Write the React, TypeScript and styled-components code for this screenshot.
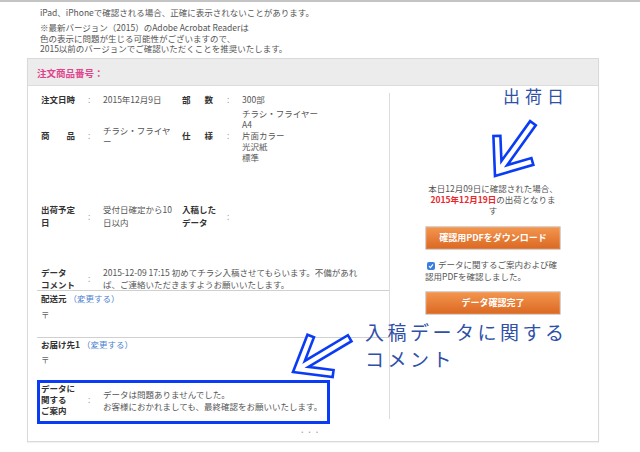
import React from 'react';
import styled, { createGlobalStyle } from 'styled-components';

const GlobalStyle = createGlobalStyle`
  html, body { margin: 0; padding: 0; background: #fff; }
  body {
    font-family: "Noto Sans CJK JP", "Noto Sans", sans-serif;
    color: #555;
  }
  * { box-sizing: border-box; }
`;

const Page = styled.div`
  position: relative;
  width: 640px;
  height: 452px;
  overflow: hidden;
`;

const TopRule = styled.div`
  height: 2px;
  background: #c4c4c4;
`;

/* ─── notice above the panel ─── */
const Notice = styled.div`
  padding: 5px 0 0 40px;
`;

const NoticeText = styled.p<{ $mb: number }>`
  margin: 0 0 ${(p) => p.$mb}px;
  font-size: 8.5px;
  line-height: 10.5px;
  color: #555;
  white-space: nowrap;
`;

/* ─── panel ─── */
const Panel = styled.section`
  margin-left: 27px;
  width: 572px;
  border: 1px solid #d9d9d9;
  box-shadow: 0 1px 1px rgba(0, 0, 0, 0.05);
  background: #fff;
`;

const PanelHeader = styled.header`
  height: 27px;
  padding: 2px 0 0 9px;
  background: #ececec;
  border-bottom: 1px solid #dcdcdc;
  font-size: 9.5px;
  font-weight: 700;
  line-height: 24px;
  color: #e0448c;
`;

const PanelBody = styled.div`
  display: flex;
`;

const LeftCol = styled.div`
  width: 361px;
  padding: 7px 0 4px 9px;
  display: flex;
  flex-direction: column;
`;

const InfoRow = styled.div<{ $mt?: number; $lh: number }>`
  display: grid;
  grid-template-columns: 47px 15px 79px 45px 15px 1fr;
  align-items: center;
  margin-top: ${(p) => p.$mt ?? 0}px;
  padding-left: 4px;
  font-size: 8.5px;
  line-height: ${(p) => p.$lh}px;
`;

const Label = styled.div`
  font-weight: 700;
  color: #333;
  white-space: nowrap;
`;

const Spread = styled.div<{ $w: number }>`
  display: flex;
  justify-content: space-between;
  width: ${(p) => p.$w}px;
  font-weight: 700;
  color: #333;
`;

const Colon = styled.div`
  color: #999;
`;

const Value = styled.div<{ $wide?: boolean }>`
  color: #555;
  white-space: nowrap;
  ${(p) => (p.$wide ? 'grid-column: 3 / -1;' : '')}
`;

const AddressBlock = styled.div<{ $pt: number; $pb: number; $gap: number }>`
  border-top: 1px solid #d0d0d0;
  padding: ${(p) => p.$pt}px 0 ${(p) => p.$pb}px 4px;
  font-size: 8.5px;
  line-height: 12px;
  display: flex;
  flex-direction: column;
  gap: ${(p) => p.$gap}px;
`;

const AddressName = styled.div`
  font-weight: 700;
  color: #333;
`;

const ChangeLink = styled.a`
  font-weight: 400;
  color: #4a7fd0;
  text-decoration: none;
`;

const Postal = styled.div`
  color: #666;
`;

const GuideBox = styled.div`
  width: 293px;
  border: 3px solid #0a3cf5;
  padding: 0 0 5px 1px;
  display: grid;
  grid-template-columns: 47px 15px 1fr;
  align-items: center;
  font-size: 8.5px;
  line-height: 11px;
`;

const GuideValue = styled.div`
  color: #555;
  line-height: 12px;
  white-space: nowrap;
`;

const MoreDots = styled.div`
  width: 293px;
  margin-top: 3px;
  padding-right: 10px;
  text-align: right;
  font-size: 6px;
  line-height: 10px;
  letter-spacing: 2px;
  color: #aaa;
`;

/* ─── right column ─── */
const RightCol = styled.div`
  flex: 1;
  margin: 7px 0 22px;
  padding: 90px 37px 0 35px;
  border-left: 1px solid #dcdcdc;
`;

const ShipText = styled.div`
  text-align: center;
  font-size: 8.5px;
  line-height: 11px;
  color: #555;
  white-space: nowrap;
`;

const ShipDate = styled.span`
  color: #e8262b;
  font-weight: 700;
`;

const OrangeButton = styled.button<{ $mt: number }>`
  display: block;
  width: 100%;
  height: 24px;
  margin-top: ${(p) => p.$mt}px;
  padding: 0;
  border: 1px solid #d2d2d2;
  border-radius: 1px;
  background: linear-gradient(#f3964f, #db6822);
  box-shadow: inset 0 0 0 1px rgba(255, 255, 255, 0.15);
  font-family: inherit;
  font-size: 9px;
  font-weight: 700;
  color: #fff;
  cursor: pointer;
`;

const CheckLine = styled.div`
  margin-top: 8px;
  font-size: 8.5px;
  line-height: 12px;
  color: #555;
  white-space: nowrap;
`;

const CheckBox = styled.span`
  display: inline-flex;
  align-items: center;
  justify-content: center;
  width: 8px;
  height: 8px;
  margin: 0 3px 0 2px;
  vertical-align: -1px;
  border-radius: 2px;
  background: #3a7ee0;
`;

/* ─── annotations drawn over the page ─── */
const ShipNote = styled.div`
  position: absolute;
  left: 503px;
  top: 86px;
  font-size: 17px;
  line-height: 20px;
  letter-spacing: 5px;
  color: #3050a8;
  white-space: nowrap;
`;

const CommentNote = styled.div`
  position: absolute;
  left: 365px;
  top: 318px;
  font-size: 19px;
  line-height: 27px;
  letter-spacing: 3.5px;
  color: #3050a8;
  white-space: nowrap;
`;

const Overlay = styled.svg`
  position: absolute;
  left: 0;
  top: 0;
  pointer-events: none;
`;

const arrowPoints = (len: number) =>
  [
    [0, 0],
    [-31.5, -24.6],
    [-35.8, -19.1],
    [-15.9, -3.5],
    [-len, -3.5],
    [-len, 3.5],
    [-15.9, 3.5],
    [-35.8, 19.1],
    [-31.5, 24.6],
  ]
    .map(([x, y]) => `${x},${y}`)
    .join(' ');

function Arrow({ x, y, angle, len }: { x: number; y: number; angle: number; len: number }) {
  return (
    <polygon
      points={arrowPoints(len)}
      transform={`translate(${x} ${y}) rotate(${angle})`}
      fill="#fff"
      stroke="#0a3cf5"
      strokeWidth={2.6}
      strokeLinejoin="miter"
    />
  );
}

export default function App() {
  return (
    <>
      <GlobalStyle />
      <Page>
        <TopRule />
        <Notice>
          <NoticeText $mb={4.5}>iPad、iPhoneで確認される場合、正確に表示されないことがあります。</NoticeText>
          <NoticeText $mb={4}>
            ※最新バージョン（2015）のAdobe Acrobat Readerは
            <br />
            色の表示に問題が生じる可能性がございますので、
            <br />
            2015以前のバージョンでご確認いただくことを推奨いたします。
          </NoticeText>
        </Notice>

        <Panel>
          <PanelHeader>注文商品番号：</PanelHeader>
          <PanelBody>
            <LeftCol>
              <InfoRow $lh={12}>
                <Label>注文日時</Label>
                <Colon>:</Colon>
                <Value>2015年12月9日</Value>
                <Spread $w={31}>
                  <span>部</span>
                  <span>数</span>
                </Spread>
                <Colon>:</Colon>
                <Value>300部</Value>
              </InfoRow>

              <InfoRow $mt={3.5} $lh={11}>
                <Spread $w={34}>
                  <span>商</span>
                  <span>品</span>
                </Spread>
                <Colon>:</Colon>
                <Value>
                  チラシ・フライヤ
                  <br />ー
                </Value>
                <Spread $w={31}>
                  <span>仕</span>
                  <span>様</span>
                </Spread>
                <Colon>:</Colon>
                <Value>
                  チラシ・フライヤー
                  <br />
                  A4
                  <br />
                  片面カラー
                  <br />
                  光沢紙
                  <br />
                  標準
                </Value>
              </InfoRow>

              <InfoRow $mt={40} $lh={13}>
                <Label>
                  出荷予定
                  <br />日
                </Label>
                <Colon>:</Colon>
                <Value>
                  受付日確定から10
                  <br />
                  日以内
                </Value>
                <Label>
                  入稿した
                  <br />
                  データ
                </Label>
                <Colon>:</Colon>
                <Value />
              </InfoRow>

              <InfoRow $mt={36.5} $lh={12}>
                <Label>
                  データ
                  <br />
                  コメント
                </Label>
                <Colon>:</Colon>
                <Value $wide>
                  2015-12-09 17:15 初めてチラシ入稿させてもらいます。不備があれ
                  <br />
                  ば、ご連絡いただきますようお願いいたします。
                </Value>
              </InfoRow>

              <AddressBlock $pt={1.5} $pb={17} $gap={4}>
                <AddressName>
                  配送元 <ChangeLink>（変更する）</ChangeLink>
                </AddressName>
                <Postal>〒</Postal>
              </AddressBlock>

              <AddressBlock $pt={0} $pb={15} $gap={3}>
                <AddressName>
                  お届け先1 <ChangeLink>（変更する）</ChangeLink>
                </AddressName>
                <Postal>〒</Postal>
              </AddressBlock>

              <GuideBox>
                <Label>
                  データに
                  <br />
                  関する
                  <br />
                  ご案内
                </Label>
                <Colon>:</Colon>
                <GuideValue>
                  データは問題ありませんでした。
                  <br />
                  お客様におかれましても、最終確認をお願いいたします。
                </GuideValue>
              </GuideBox>

              <MoreDots>• • •</MoreDots>
            </LeftCol>

            <RightCol>
              <ShipText>
                本日12月09日に確認された場合、
                <br />
                <ShipDate>2015年12月19日</ShipDate>の出荷となりま
                <br />す
              </ShipText>
              <OrangeButton $mt={10}>確認用PDFをダウンロード</OrangeButton>
              <CheckLine>
                <CheckBox>
                  <svg width="6" height="6" viewBox="0 0 6 6">
                    <path d="M1 3.2 L2.4 4.6 L5 1.4" fill="none" stroke="#fff" strokeWidth="1.1" />
                  </svg>
                </CheckBox>
                データに関するご案内および確
                <br />
                認用PDFを確認しました。
              </CheckLine>
              <OrangeButton $mt={9}>データ確認完了</OrangeButton>
            </RightCol>
          </PanelBody>
        </Panel>

        <ShipNote>出荷日</ShipNote>
        <CommentNote>
          入稿データに関する
          <br />
          コメント
        </CommentNote>

        <Overlay width={640} height={452} viewBox="0 0 640 452">
          <Arrow x={495} y={176} angle={125.7} len={65} />
          <Arrow x={293} y={372} angle={149.2} len={66} />
        </Overlay>
      </Page>
    </>
  );
}
